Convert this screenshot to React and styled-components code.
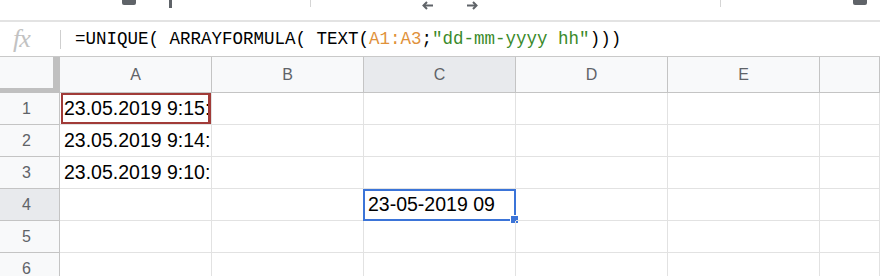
import React from "react";
import styled, { createGlobalStyle } from "styled-components";

const Global = createGlobalStyle`
  html, body {
    margin: 0;
    padding: 0;
    background: #fff;
    overflow: hidden;
  }
  body {
    font-family: "Liberation Sans", Arial, sans-serif;
  }
`;

const Page = styled.div`
  width: 880px;
  height: 276px;
  overflow: hidden;
  display: flex;
  flex-direction: column;
`;

const Toolbar = styled.div`
  height: 20px;
  flex: none;
  border-bottom: 2px solid #e3e3e3;
  display: flex;
  align-items: flex-start;
`;

const ToolItem = styled.div`
  flex: none;
  margin-left: ${(p) => p.$gap}px;
  margin-top: ${(p) => p.$top || 0}px;
  display: flex;
`;

const Stub = styled.div`
  width: 14px;
  height: 5px;
  background: #5f6368;
  border-radius: 0 0 2px 2px;
`;

const Stem = styled.div`
  width: 3px;
  height: 8px;
  background: #5f6368;
`;

const ToolSep = styled.div`
  width: 1px;
  height: 7px;
  background: #d5d5d5;
`;

const FormulaBar = styled.div`
  height: 34px;
  flex: none;
  border-bottom: 1px solid #c9c9c9;
  display: flex;
  align-items: center;
`;

const Fx = styled.div`
  width: 60px;
  box-sizing: border-box;
  padding-left: 13px;
  font-family: "Liberation Serif", "Times New Roman", serif;
  font-style: italic;
  font-size: 26px;
  color: #c2c2c2;
  letter-spacing: -1px;
`;

const FxSep = styled.div`
  width: 1px;
  height: 19px;
  background: #cfcfcf;
`;

const Formula = styled.div`
  padding-left: 14px;
  font-family: "Liberation Mono", "Courier New", monospace;
  font-size: 17.5px;
  color: #000;
  white-space: pre;
`;

const Ref = styled.span`
  color: #e0913a;
`;

const Str = styled.span`
  color: #3a8a2a;
`;

const Sheet = styled.div`
  display: grid;
  grid-template-columns: 60px repeat(5, 152px) 1fr;
  grid-template-rows: 36px repeat(6, 32px);
`;

const Corner = styled.div`
  background: #f8f9fa;
  box-sizing: border-box;
  position: relative;
  border-right: 1px solid #c0c0c0;
  border-bottom: 1px solid #c0c0c0;
  &::before {
    content: "";
    position: absolute;
    right: 0;
    top: 0;
    bottom: 0;
    width: 6px;
    background: #c0c0c0;
  }
  &::after {
    content: "";
    position: absolute;
    left: 0;
    right: 0;
    bottom: 0;
    height: 4px;
    background: #c0c0c0;
  }
`;

const ColHead = styled.div`
  box-sizing: border-box;
  background: ${(p) => (p.$active ? "#e8eaed" : "#f8f9fa")};
  border-right: 1px solid #c4c4c4;
  border-bottom: 1px solid #c4c4c4;
  display: flex;
  align-items: center;
  justify-content: center;
  font-size: 16px;
  color: #5f6368;
  padding-top: 1px;
`;

const RowHead = styled.div`
  box-sizing: border-box;
  background: ${(p) => (p.$active ? "#e8eaed" : "#f8f9fa")};
  border-right: 1px solid #c4c4c4;
  border-bottom: 1px solid #c4c4c4;
  display: flex;
  align-items: center;
  justify-content: center;
  padding-right: 6px;
  font-size: 16px;
  color: #5f6368;
`;

const Cell = styled.div`
  box-sizing: border-box;
  position: relative;
  border-right: 1px solid #e2e2e2;
  border-bottom: 1px solid #e2e2e2;
  display: flex;
  align-items: center;
  padding-left: 4px;
  font-size: 19.5px;
  color: #000;
  white-space: nowrap;
  overflow: ${(p) => (p.$selected ? "visible" : "hidden")};
`;

const CellText = styled.span`
  display: block;
  overflow: hidden;
  max-width: 100%;
`;

const Cursor = styled.div`
  position: absolute;
  top: 0;
  left: 1px;
  right: -1px;
  bottom: 0;
  border: 2px solid #a13b38;
  border-right-width: 4px;
  pointer-events: none;
`;

const Selection = styled.div`
  position: absolute;
  top: 0;
  left: -1px;
  right: -1px;
  bottom: -1px;
  border: 2px solid #3b74d8;
  pointer-events: none;
`;

const Handle = styled.div`
  position: absolute;
  right: -5px;
  bottom: -5px;
  width: 7px;
  height: 7px;
  background: #3b74d8;
  border: 1px solid #fff;
`;

const Arrow = ({ dir }) => (
  <svg width="12" height="9" viewBox="0 0 12 9">
    <g
      transform={dir === "left" ? "" : "matrix(-1 0 0 1 12 0)"}
      fill="none"
      stroke="#5f6368"
      strokeWidth="2"
    >
      <path d="M11 4.5H2" />
      <path d="M5 1 1.5 4.5 5 8" />
    </g>
  </svg>
);

const cols = ["A", "B", "C", "D", "E", ""];
const values = {
  "1-0": "23.05.2019 9:15:",
  "2-0": "23.05.2019 9:14:",
  "3-0": "23.05.2019 9:10:",
  "4-2": "23-05-2019 09",
};

export default function App() {
  const rows = [1, 2, 3, 4, 5, 6];
  return (
    <Page>
      <Global />
      <Toolbar>
        <ToolItem $gap={122}>
          <Stub />
        </ToolItem>
        <ToolItem $gap={33}>
          <Stem />
        </ToolItem>
        <ToolItem $gap={138}>
          <ToolSep />
        </ToolItem>
        <ToolItem $gap={111} $top={1}>
          <Arrow dir="left" />
        </ToolItem>
        <ToolItem $gap={32} $top={1}>
          <Arrow dir="right" />
        </ToolItem>
        <ToolItem $gap={242}>
          <ToolSep />
        </ToolItem>
        <ToolItem $gap={132}>
          <Stub />
        </ToolItem>
      </Toolbar>
      <FormulaBar>
        <Fx>fx</Fx>
        <FxSep />
        <Formula>
          =UNIQUE( ARRAYFORMULA( TEXT(<Ref>A1:A3</Ref>;<Str>"dd-mm-yyyy hh"</Str>)))
        </Formula>
      </FormulaBar>
      <Sheet>
        <Corner />
        {cols.map((c, i) => (
          <ColHead key={i} $active={c === "C"}>
            {c}
          </ColHead>
        ))}
        {rows.map((r) => (
          <React.Fragment key={r}>
            <RowHead $active={r === 4}>{r}</RowHead>
            {cols.map((c, i) => {
              const v = values[`${r}-${i}`];
              const cursor = r === 1 && i === 0;
              const selected = r === 4 && i === 2;
              return (
                <Cell key={i} $selected={selected}>
                  {v && <CellText>{v}</CellText>}
                  {cursor && <Cursor />}
                  {selected && (
                    <Selection>
                      <Handle />
                    </Selection>
                  )}
                </Cell>
              );
            })}
          </React.Fragment>
        ))}
      </Sheet>
    </Page>
  );
}
